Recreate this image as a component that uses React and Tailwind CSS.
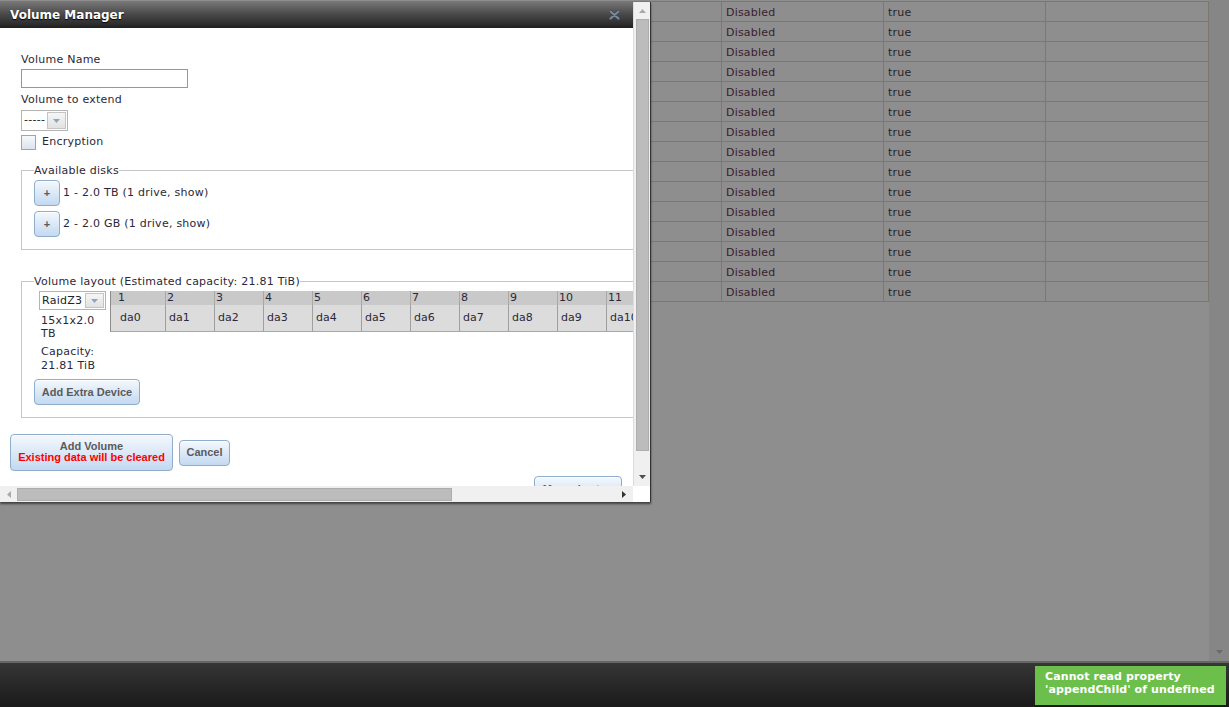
import React from 'react';

const rows = Array.from({ length: 15 }, (_, i) => i);
const slots = Array.from({ length: 13 }, (_, i) => i);

const btn =
  "rounded-[4px] border border-[#8fadcc] bg-linear-to-b from-[#f4f8fd] to-[#c3d9f1] font-['Liberation_Sans',Arial,sans-serif] font-bold text-[11px] tracking-normal text-[#5b5b5b] shadow-[inset_0_1px_0_#ffffff]";

// small triangle used by the scrollbars and selects
const Tri = ({ dir, color, w = 7, h = 4 }) => {
  const pts = {
    up: `0,${h} ${w / 2},0 ${w},${h}`,
    down: `0,0 ${w},0 ${w / 2},${h}`,
    left: `${h},0 ${h},${w} 0,${w / 2}`,
    right: `0,0 0,${w} ${h},${w / 2}`,
  }[dir];
  const vert = dir === 'up' || dir === 'down';
  return (
    <svg width={vert ? w : h} height={vert ? h : w} className="block">
      <polygon points={pts} fill={color} />
    </svg>
  );
};

const Select = ({ value, width, height }) => (
  <div className={`flex border border-[#b4b4b4] bg-white ${width} ${height}`}>
    <div className="flex-1 pl-[2px] text-[11px] leading-[17px] text-[#222] overflow-hidden">{value}</div>
    <div className="w-[19px] m-[1px] border border-[#c4c4c4] bg-linear-to-b from-[#f6f6f6] to-[#e2e2e2] flex items-center justify-center">
      <Tri dir="down" color="#90a4c0" />
    </div>
  </div>
);

const VolumeManager = () => (
  <div className="absolute left-0 top-[2px] w-[651px] flex flex-col bg-white border-r border-[#333] shadow-[0_2px_2px_rgba(0,0,0,0.55)]">
    <div className="flex">
      {/* scrolled content */}
      <div className="w-[633px] h-[484px] overflow-hidden">
        <div className="h-[26px] flex items-center justify-between pl-[10px] pr-[9px] pt-[2px] bg-linear-to-b from-[#767676] via-[#4a4a4a] to-[#282828] border-b-2 border-[#222]">
          <span className="text-white font-bold text-[12px] [text-shadow:0_1px_1px_#000]">Volume Manager</span>
          <svg width="11" height="10" viewBox="0 0 11 10" className="mr-[4px]">
            <path d="M1.5 1.5 L9.5 8.5 M9.5 1.5 L1.5 8.5" stroke="#3f4650" strokeWidth="3.4" strokeLinecap="round" />
            <path d="M1.5 1.5 L9.5 8.5 M9.5 1.5 L1.5 8.5" stroke="#7b889a" strokeWidth="2" strokeLinecap="round" />
          </svg>
        </div>

        <div className="px-[10px] pt-[25px] flex flex-col text-[11px] tracking-[0.25px] text-[#2c2838]">
          <div className="ml-[11px] leading-[14px]">Volume Name</div>
          <div className="ml-[11px] mt-[2px] w-[167px] h-[19px] border border-[#7f9db9] bg-white" />
          <div className="ml-[11px] mt-[5px] leading-[14px]">Volume to extend</div>
          <div className="ml-[11px] mt-[3px]">
            <Select value="-----" width="w-[47px]" height="h-[21px]" />
          </div>
          <div className="ml-[11px] mt-[4px] flex items-center h-[15px]">
            <div className="w-[15px] h-[15px] border border-[#a4a4a4] bg-linear-to-b from-[#f6f8fb] to-[#dbe4ee]" />
            <span className="ml-[6px]">Encryption</span>
          </div>

          <fieldset className="ml-[11px] mt-[14px] w-[700px] border border-[#c6c6c6] px-[12px] pt-[3px] pb-[12px]">
            <legend className="leading-[13px] px-0">Available disks</legend>
            <div className="flex items-center">
              <div className={`${btn} w-[26px] h-[26px] flex items-center justify-center text-[10px]`}>+</div>
              <span className="ml-[3px]">1 - 2.0 TB (1 drive, show)</span>
            </div>
            <div className="flex items-center mt-[5px]">
              <div className={`${btn} w-[26px] h-[26px] flex items-center justify-center text-[10px]`}>+</div>
              <span className="ml-[3px]">2 - 2.0 GB (1 drive, show)</span>
            </div>
          </fieldset>

          <fieldset className="ml-[11px] mt-[25px] w-[700px] border border-[#c6c6c6] px-[12px] pt-[3px] pb-[12px]">
            <legend className="leading-[13px] px-0">Volume layout (Estimated capacity: 21.81 TiB)</legend>
            <div className="flex items-start">
              <div className="w-[76px] shrink-0">
                <div className="ml-[5px]">
                  <Select value="RaidZ3" width="w-[67px]" height="h-[19px]" />
                </div>
                <div className="pl-[7px] mt-[4px] leading-[13px]">15x1x2.0<br />TB</div>
                <div className="pl-[7px] mt-[5px] leading-[14px]">Capacity:<br />21.81 TiB</div>
              </div>
              <div className="border-l border-[#8c8c8c] border-b border-b-[#a8a8a8] shrink-0 tracking-normal">
                <div className="flex h-[14px] bg-[#c9c9c9]">
                  <div className="w-[6px]" />
                  {slots.map((i) => (
                    <div key={i} className="w-[49px] shrink-0 border-r border-[#a9a9a9] pl-[1px] leading-[14px]">{i + 1}</div>
                  ))}
                </div>
                <div className="flex h-[26px] bg-[#dcdcdc]">
                  <div className="w-[6px]" />
                  {slots.map((i) => (
                    <div key={i} className="w-[49px] shrink-0 border-r border-[#a0a0a0] pl-[3px] leading-[26px]">da{i}</div>
                  ))}
                </div>
              </div>
            </div>
            <div className={`${btn} mt-[6px] w-[106px] h-[26px] flex items-center justify-center`}>Add Extra Device</div>
          </fieldset>

          <div className="mt-[16px] flex items-center gap-[6px]">
            <div className={`${btn} w-[163px] h-[37px] pt-[6px] leading-[11px] text-center`}>
              <div>Add Volume</div>
              <div className="text-[#ff0000]">Existing data will be cleared</div>
            </div>
            <div className={`${btn} w-[51px] h-[26px] flex items-center justify-center`}>Cancel</div>
          </div>
          <div className="mt-[5px] self-end mr-[1px]">
            <div className={`${btn} w-[88px] h-[26px] flex items-center justify-center`}>Manual setup</div>
          </div>
        </div>
      </div>

      {/* vertical scrollbar */}
      <div className="w-[17px] h-[484px] bg-[#f0f0f0] border-l border-[#dcdcdc] flex flex-col items-center">
        <div className="h-[17px] flex items-center justify-center"><Tri dir="up" color="#a9a9a9" /></div>
        <div className="w-[13px] h-[432px] bg-[#bcbcbc] border border-[#adadad]" />
        <div className="flex-1 flex items-end pb-[7px]"><Tri dir="down" color="#505050" /></div>
      </div>
    </div>

    {/* horizontal scrollbar */}
    <div className="flex h-[16px]">
      <div className="w-[633px] bg-[#f0f0f0] flex items-center">
        <div className="w-[17px] flex justify-center"><Tri dir="left" color="#a9a9a9" /></div>
        <div className="w-[435px] h-[13px] bg-[#bcbcbc] border border-[#adadad]" />
        <div className="flex-1 flex justify-end pr-[7px]"><Tri dir="right" color="#333" /></div>
      </div>
      <div className="flex-1 bg-white" />
    </div>
  </div>
);

export default function App() {
  return (
    <div className="relative w-[1229px] h-[707px] overflow-hidden flex flex-col bg-[#8e8e8e] font-['DejaVu_Sans',sans-serif] text-[11px]">
      <div className="flex-1 flex">
        <div className="w-[1209px]">
          <div className="mt-[1px] border-t border-[#7d7771]">
            {rows.map((r) => (
              <div key={r} className="flex h-[20px] border-b border-[#7d7771]">
                <div className="w-[722px] border-r border-[#7d7771]" />
                <div className="w-[162px] border-r border-[#7d7771] pl-[4px] pt-[1px] leading-[19px] tracking-[0.2px] text-[#3a1d2c]">Disabled</div>
                <div className="w-[162px] border-r border-[#7d7771] pl-[4px] pt-[1px] leading-[19px] tracking-[0.2px] text-[#262626]">true</div>
                <div className="w-[163px] border-r border-[#7d7771]" />
              </div>
            ))}
          </div>
        </div>
        <div className="flex-1 bg-[#868686] flex flex-col justify-end items-center pb-[7px]">
          <Tri dir="down" color="#6a6a6a" />
        </div>
      </div>

      <div className="h-[46px] border-t-2 border-[#666] bg-linear-to-b from-[#363636] to-[#1a1a1a] flex justify-end pt-[3px] pr-[3px]">
        <div className="w-[191px] h-[39px] bg-[#6bbf4a] pl-[10px] pt-[4px] text-white font-bold text-[11px] leading-[13px] tracking-[0.1px]">
          <div>Cannot read property</div>
          <div>'appendChild' of undefined</div>
        </div>
      </div>

      <VolumeManager />
    </div>
  );
}
